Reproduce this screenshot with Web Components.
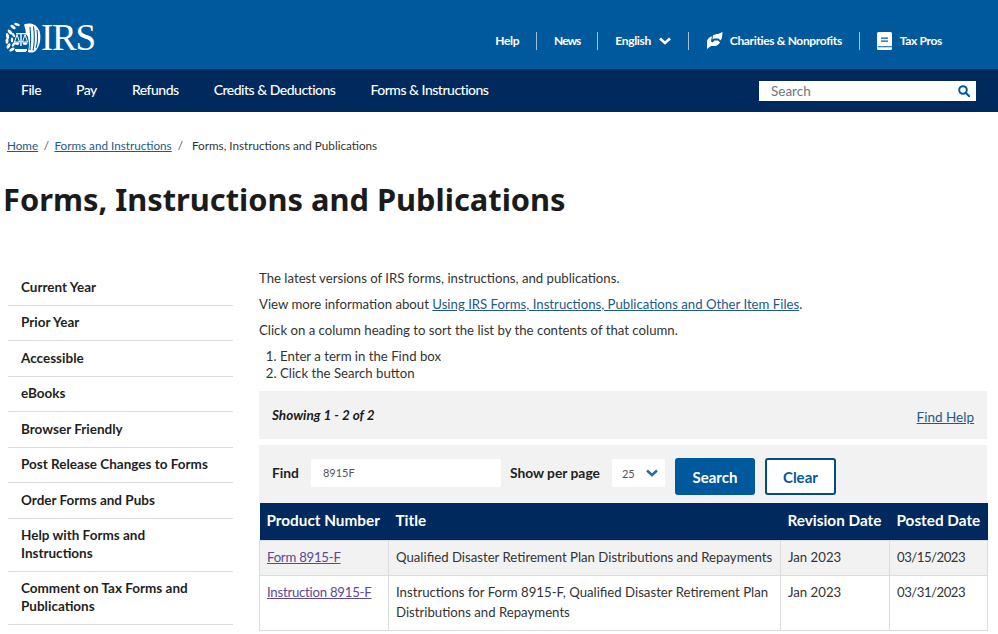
<!DOCTYPE html>
<html lang="en">
<head>
<meta charset="utf-8">
<title>Forms, Instructions and Publications</title>
<style>
	body {
		margin: 0;
		background: #fff;
		color: #1b1b1b;
		font-family: Lato, "Noto Sans", sans-serif;
		overflow: hidden;
	}
</style>
</head>
<body>
<irs-header></irs-header>
<irs-nav></irs-nav>
<irs-crumbs></irs-crumbs>
<irs-layout>
	<irs-sidenav slot="side"></irs-sidenav>
	<irs-intro></irs-intro>
	<irs-results></irs-results>
	<irs-finder></irs-finder>
	<irs-table></irs-table>
</irs-layout>

<script>
const handIcon = `<svg width="17" height="17" viewBox="0 0 17 17" fill="#fff"><path d="M1 9C2 6 4 4.500 6 4.500L5 9C5 10 6 10.500 7 10L8.500 8.500H12L14 10.500C13 12 11 14 9 14H5L1 17z"/><path d="M6.800 3.800C8 2.500 10 2 12 2L16.500 0 16 6 14.500 8.500 12.500 6.500H8L6.600 7.500z"/></svg>`;
const bookIcon = `<svg width="15" height="18" viewBox="0 0 15 18"><path fill="#fff" d="M1.500 0h12A1.500 1.500 0 0 1 15 1.500v15a1.500 1.500 0 0 1-1.500 1.500h-12A1.500 1.500 0 0 1 0 16.500v-15A1.500 1.500 0 0 1 1.500 0z"/><path fill="#00599c" d="M4 5.500h7v1.300H4zM4 8.500h7v1.300H4zM1 14.200h14v1H1z"/></svg>`;
const searchIcon = `<svg width="12" height="12" viewBox="0 0 12 12" fill="none" stroke="#00599c" stroke-width="2"><circle cx="5" cy="5" r="3.800"/><path d="M7.800 7.800 11.200 11.200" stroke-linecap="round"/></svg>`;

// seal: wreath on the left, scales in the middle, eagle wing on the right
const sealLeaves = [[5,10,-40,1.500,3],[2.500,14,-15,1.500,3],[2,19,5,1.500,3],[3.500,24,30,1.500,3],[7,27.500,60,1.500,3],[8,5,-55,1.500,3],[12,2.500,-70,1.300,3],[8.500,13,-30,1.200,2.400],[7,18,0,1.200,2.400],[8.500,22.500,35,1.200,2.400]]
	.map(([x, y, r, a, b]) => `<ellipse cx="${x}" cy="${y}" rx="${a}" ry="${b}" transform="rotate(${r} ${x} ${y})"/>`).join('');
const sealIcon = `<svg width="36" height="31" viewBox="0 0 36 31" fill="#fff">${sealLeaves}
	<path d="M11 11h10v1.300h-4.300V24h-1.400V12.300H11z"/>
	<path d="M10 27h12v1.500l-1.500 1.500h-9L10 28.500z"/>
	<path d="M12 12.500 9.500 20h5zM20 12.500 17.500 20h5z" fill="none" stroke="#fff" stroke-width="1"/>
	<path d="M9.500 20.500h5a2.500 2.500 0 0 1-5 0zM17.500 20.500h5a2.500 2.500 0 0 1-5 0z"/>
	<path d="M19 2.500C25 0 32 2 34.500 9c1.800 6 1 14-3.500 19.500-2.500 2.500-6 2.500-8 1.500 1.500-6 1-12-.5-16l-1.500-1.500-.5-4.500z"/>
	<path d="M25 5c.800 6 1 15 0 23M28.500 4.500c1 7 1 17-.5 24M32 8c.800 6 .8 13-1 18" fill="none" stroke="#00599c" stroke-width="1.100"/></svg>`;

class IrsHeader extends HTMLElement {
	constructor() {
		super();
		this.attachShadow({ mode: 'open' });
	}

	connectedCallback() {
		this.shadowRoot.innerHTML = `
		<style>
			:host { display: flex; height: 69px; background: #00599c; color: #fff; justify-content: space-between; align-items: center; padding: 0 56px 0 5px; }
			.logo { display: flex; align-items: center; margin-top: 5px; }
			.logo b { font: 400 37px/1 "Liberation Serif", serif; letter-spacing: -1.200px; }
			ul { display: flex; list-style: none; margin: 12px 0 0; padding: 0; font-size: 12px; font-weight: 700; letter-spacing: -.35px; }
			li { display: flex; align-items: center; gap: 8px; height: 18px; padding: 0 17px; border-left: 1px solid #9fc0da; }
			li:first-child { border-left: 0; }
			li:last-child { padding-right: 0; }
			.tight { letter-spacing: -1px; }
			.hand { gap: 7px; }
		</style>
		<div class="logo">${sealIcon}<b>IRS</b></div>
		<ul>
			<li>Help</li>
			<li class="tight">News</li>
			<li>English <svg width="12" height="8" viewBox="0 0 12 8" fill="none" stroke="#fff" stroke-width="2.600"><path d="M1 1.500 6 6l5-4.500"/></svg></li>
			<li class="hand">${handIcon}Charities &amp; Nonprofits</li>
			<li>${bookIcon}Tax Pros</li>
		</ul>`;
	}
}
customElements.define('irs-header', IrsHeader);

class IrsNav extends HTMLElement {
	constructor() {
		super();
		this.attachShadow({ mode: 'open' });
	}

	connectedCallback() {
		this.shadowRoot.innerHTML = `
		<style>
			:host { display: flex; height: 43px; background: #002a5e; color: #fff; align-items: center; justify-content: space-between; padding: 0 22px 2px 21px; box-sizing: border-box; font-size: 14px; font-weight: 500; letter-spacing: -.5px; }
			nav { display: flex; gap: 35px; }
			.search { display: flex; align-items: center; justify-content: space-between; width: 217px; height: 20px; box-sizing: border-box; background: #fff; padding: 0 6px 0 12px; color: #71767a; font-size: 13.500px; font-weight: 400; letter-spacing: 0; margin-top: 2px; }
		</style>
		<nav><span>File</span><span>Pay</span><span>Refunds</span><span>Credits &amp; Deductions</span><span>Forms &amp; Instructions</span></nav>
		<div class="search"><span>Search</span>${searchIcon}</div>`;
	}
}
customElements.define('irs-nav', IrsNav);

class IrsCrumbs extends HTMLElement {
	constructor() {
		super();
		this.attachShadow({ mode: 'open' });
	}

	connectedCallback() {
		this.shadowRoot.innerHTML = `
		<style>
			:host { display: block; padding: 25px 0 0 7px; font-size: 11.700px; line-height: 16px; color: #333; }
			a { color: #1d5a8a; }
			i { font-style: normal; margin: 0 5.500px; color: #555; }
			i:last-of-type { margin: 0 9px 0 6px; }
			h1 { margin: 24px 0 0 -4px; font: 700 30.800px/44px "Noto Sans", sans-serif; color: #1b1b1b; }
		</style>
		<a href="#">Home</a><i>/</i><a href="#">Forms and Instructions</a><i>/</i><span>Forms, Instructions and Publications</span>
		<h1>Forms, Instructions and Publications</h1>`;
	}
}
customElements.define('irs-crumbs', IrsCrumbs);

class IrsLayout extends HTMLElement {
	constructor() {
		super();
		this.attachShadow({ mode: 'open' });
		this.shadowRoot.innerHTML = `
		<style>
			:host { display: grid; grid-template-columns: 225px 728px; column-gap: 26px; padding: 48px 0 0 8px; }
			main { display: block; }
		</style>
		<slot name="side"></slot>
		<main><slot></slot></main>`;
	}
}
customElements.define('irs-layout', IrsLayout);

class IrsSidenav extends HTMLElement {
	constructor() {
		super();
		this.attachShadow({ mode: 'open' });
	}

	connectedCallback() {
		const items = ['Current Year', 'Prior Year', 'Accessible', 'eBooks', 'Browser Friendly', 'Post Release Changes to Forms',
			'Order Forms and Pubs', 'Help with Forms and<br>Instructions', 'Comment on Tax Forms and<br>Publications'];
		this.shadowRoot.innerHTML = `
		<style>
			:host { display: block; font-size: 13.500px; font-weight: 700; color: #1f1f1f; padding-top: 1px; }
			div { padding: 8.500px 13px; line-height: 17.500px; border-bottom: 1px solid #dcdcdc; }
		</style>
		${items.map(t => `<div>${t}</div>`).join('')}`;
	}
}
customElements.define('irs-sidenav', IrsSidenav);

class IrsIntro extends HTMLElement {
	constructor() {
		super();
		this.attachShadow({ mode: 'open' });
	}

	connectedCallback() {
		this.shadowRoot.innerHTML = `
		<style>
			:host { display: block; font-size: 13.200px; color: #333; line-height: 18px; }
			p { margin: 0 0 8px; }
			p:nth-of-type(3) { margin-bottom: 9px; }
			a { color: #1d5a8a; }
			ol { margin: 0 0 9px; padding-left: 21px; line-height: 17px; }
		</style>
		<p>The latest versions of IRS forms, instructions, and publications.</p>
		<p>View more information about <a href="#">Using IRS Forms, Instructions, Publications and Other Item Files</a>.</p>
		<p>Click on a column heading to sort the list by the contents of that column.</p>
		<ol><li>Enter a term in the Find box</li><li>Click the Search button</li></ol>`;
	}
}
customElements.define('irs-intro', IrsIntro);

class IrsResults extends HTMLElement {
	constructor() {
		super();
		this.attachShadow({ mode: 'open' });
	}

	connectedCallback() {
		this.shadowRoot.innerHTML = `
		<style>
			:host { display: flex; justify-content: space-between; height: 48px; box-sizing: border-box; padding: 15px 13px 0; background: #f2f2f2; margin-bottom: 6px; font-size: 13.500px; line-height: 18px; }
			b { font-style: italic; }
			a { color: #1d5a8a; margin-top: 2px; }
		</style>
		<b>Showing 1 - 2 of 2</b><a href="#">Find Help</a>`;
	}
}
customElements.define('irs-results', IrsResults);

class IrsFinder extends HTMLElement {
	constructor() {
		super();
		this.attachShadow({ mode: 'open' });
	}

	connectedCallback() {
		this.shadowRoot.innerHTML = `
		<style>
			:host { display: flex; height: 58px; box-sizing: border-box; padding: 14px 13px 0; background: #f2f2f2; font-size: 13.800px; font-weight: 700; color: #222; }
			label { line-height: 28px; }
			.input { width: 190px; height: 28px; margin: 0 9px 0 12px; padding-left: 12px; box-sizing: border-box; background: #fff; border-radius: 2px; font-size: 11px; line-height: 28px; font-weight: 400; color: #555; }
			.select { display: flex; align-items: center; justify-content: space-between; width: 53px; height: 28px; margin: 0 10px 0 12px; padding: 0 7px 0 10px; box-sizing: border-box; background: #fff; border-radius: 2px; font-size: 11px; font-weight: 400; color: #555; }
			button { height: 37px; margin: -1px 0 0; border-radius: 3px; font: 700 15px Lato, sans-serif; box-sizing: border-box; }
			.primary { width: 80px; background: #00599c; border: 0; color: #fff; margin-right: 10px; }
			.ghost { width: 71px; background: #fff; border: 2px solid #00507f; color: #00599c; }
		</style>
		<label>Find</label><div class="input">8915F</div>
		<label>Show per page</label>
		<div class="select">25 <svg width="12" height="8" viewBox="0 0 12 8" fill="none" stroke="#2a6ca8" stroke-width="2.500"><path d="M1 1.500 6 6l5-4.500"/></svg></div>
		<button class="primary">Search</button><button class="ghost">Clear</button>`;
	}
}
customElements.define('irs-finder', IrsFinder);

class IrsTable extends HTMLElement {
	constructor() {
		super();
		this.attachShadow({ mode: 'open' });
	}

	connectedCallback() {
		this.shadowRoot.innerHTML = `
		<style>
			:host { display: block; font-size: 13.200px; color: #333; }
			table { border-collapse: collapse; width: 728px; table-layout: fixed; line-height: 20px; }
			th { background: #002a5e; color: #fff; text-align: left; font-size: 15.300px; font-weight: 700; height: 37px; padding: 0 7px 2px; box-sizing: border-box; white-space: nowrap; }
			td { vertical-align: top; padding: 6px 7px 8px; border: 1px solid #dcdcdc; }
			tbody tr:nth-child(1) td { background: #f2f2f2; }
			a { color: #5f4794; letter-spacing: -.25px; }
			.num { letter-spacing: -.5px; }
		</style>
		<table>
			<colgroup><col style="width:129px"><col style="width:392px"><col style="width:109px"><col style="width:98px"></colgroup>
			<thead><tr><th>Product Number</th><th>Title</th><th>Revision Date</th><th>Posted Date</th></tr></thead>
			<tbody>
				<tr><td><a href="#">Form 8915-F</a></td><td>Qualified Disaster Retirement Plan Distributions and Repayments</td><td>Jan 2023</td><td class="num">03/15/2023</td></tr>
				<tr><td><a href="#">Instruction 8915-F</a></td><td>Instructions for Form 8915-F, Qualified Disaster Retirement Plan Distributions and Repayments</td><td>Jan 2023</td><td class="num">03/31/2023</td></tr>
			</tbody>
		</table>`;
	}
}
customElements.define('irs-table', IrsTable);
</script>
</body>
</html>
